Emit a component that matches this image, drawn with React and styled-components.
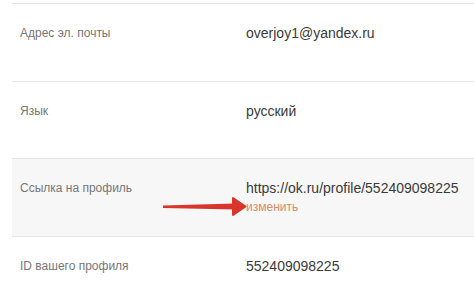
import React from "react";
import styled, {createGlobalStyle} from "styled-components";

const GlobalStyle = createGlobalStyle`
  html, body {
    margin: 0;
    padding: 0;
    background: #fff;
  }
  body {
    font-family: "Liberation Sans", Arial, sans-serif;
  }
`;

export const Page = styled.div`
  padding-top: 3px;
  padding-left: 12px;
  width: 474px;
  height: 292px;
  box-sizing: border-box;
  overflow: hidden;
`;

export const Row = styled.div`
  position: relative;
  display: grid;
  grid-template-columns: 234px 1fr;
  box-sizing: border-box;
  height: 77.5px;
  padding-top: 21px;
  border-top: 1px solid #e6e6e6;
  background: ${(props) => (props.$shaded ? "#f7f7f7" : "#fff")};
`;

export const Label = styled.div`
  padding-left: 8px;
  font-size: 12px;
  line-height: 16px;
  color: #777;
`;

export const Value = styled.div`
  display: flex;
  flex-direction: column;
  align-items: flex-start;
  font-size: 14px;
  line-height: 16px;
  color: #3a3a3a;
`;

export const Change = styled.a`
  margin-top: 3px;
  font-size: 12px;
  line-height: 16px;
  color: #dc8b68;
  text-decoration: none;
  cursor: pointer;
`;

// red pointer drawn over the row, aimed at the link
export const Arrow = styled.svg`
  position: absolute;
  left: 151px;
  top: 37px;
`;

const rows = [
  {label: "Адрес эл. почты", value: "overjoy1@yandex.ru"},
  {label: "Язык", value: "русский"},
  {label: "Ссылка на профиль", value: "https://ok.ru/profile/552409098225", link: true},
  {label: "ID вашего профиля", value: "552409098225"},
];

export default function App() {
  return (
    <>
      <GlobalStyle />
      <Page>
        {rows.map((row) => (
          <Row key={row.label} $shaded={row.link}>
            <Label>{row.label}</Label>
            <Value>
              {row.value}
              {row.link && <Change>изменить</Change>}
            </Value>
            {row.link && (
              <Arrow width="84" height="21" viewBox="0 0 84 21">
                <polygon points="0,9.5 72,7.5 72,13.5 0,12" fill="#d8362c" />
                <polygon
                  points="70,2 82.5,10.5 70,19"
                  fill="#d8362c"
                  stroke="#d8362c"
                  strokeWidth="2"
                  strokeLinejoin="round"
                />
              </Arrow>
            )}
          </Row>
        ))}
      </Page>
    </>
  );
}
